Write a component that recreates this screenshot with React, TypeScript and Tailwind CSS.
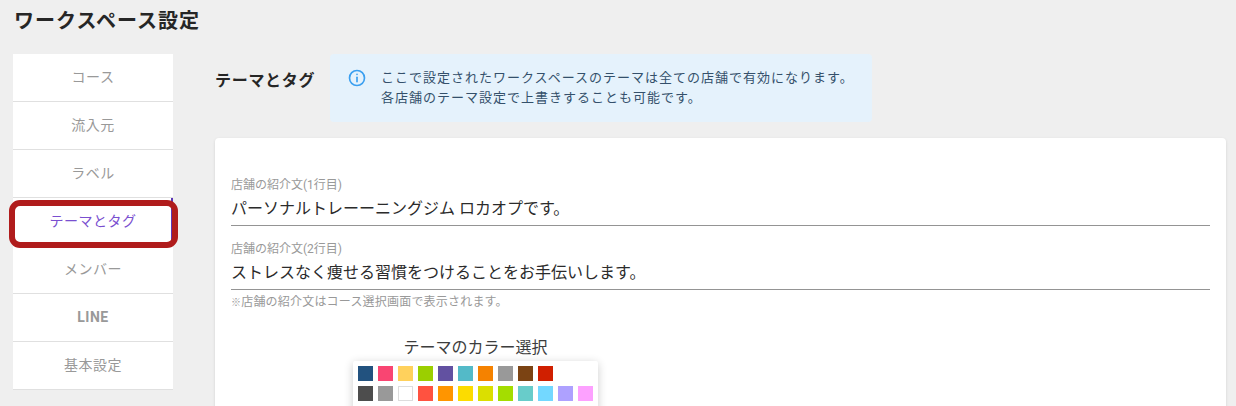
import * as React from "react";

const navItems = ["コース", "流入元", "ラベル", "テーマとタグ", "メンバー", "LINE", "基本設定"];

const colorRows = [
  ["#22527f", "#f94572", "#ffd15c", "#9bcf00", "#6251a1", "#53bac8", "#f58200", "#999999", "#7b4313", "#d01f00"],
  ["#4d4d4d", "#999999", "#ffffff", "#ff5240", "#ff9500", "#fcdc00", "#dbdf00", "#a4dd00", "#68ccca", "#73d8ff", "#aea1ff", "#fda1ff"],
];

function Field({ label, value }: { label: string; value: string }) {
  return (
    <div className="flex flex-col">
      <span className="text-[12px] leading-[16px] text-[#999999]">{label}</span>
      <div className="mt-[4px] h-[29px] border-b border-[#949494] text-[16px] leading-[24px] text-[#2b2b2b]">
        {value}
      </div>
    </div>
  );
}

export default function App() {
  return (
    <div className="h-[406px] w-[1236px] overflow-hidden bg-[#efefef] font-['Roboto','Noto_Sans_CJK_JP',sans-serif]">
      <h1 className="pt-[8px] pl-[14px] text-[20px] leading-[26px] font-bold tracking-[1px] text-[#262626]">
        ワークスペース設定
      </h1>

      <div className="mt-[20px] flex items-start pl-[13px]">
        <nav className="flex w-[160px] flex-col bg-white">
          {navItems.map((item) => {
            const active = item === "テーマとタグ";
            return (
              <div
                className={`relative flex h-[48px] items-center justify-center border-b border-[#e0e0e0] text-[14px] tracking-[0.5px] ${
                  active ? "text-[#7a4fd0]" : "text-[#999999]"
                } ${item === "LINE" ? "font-bold text-[#7a7a7a]" : ""}`}
                key={item}
              >
                {item}
                {active && (
                  <>
                    <span className="absolute top-0 right-0 h-full w-[2px] bg-[#5b37b7]" />
                    <span className="absolute top-[2px] left-[-4px] h-[48px] w-[169px] rounded-[11px] border-[6px] border-[#b01c1c]" />
                  </>
                )}
              </div>
            );
          })}
        </nav>

        <main className="ml-[42px] flex w-[1011px] flex-col">
          <div className="flex h-[68px] items-start">
            <h2 className="mt-[17px] w-[115px] text-[16px] leading-[20px] font-bold tracking-[0.7px] text-[#262626]">
              テーマとタグ
            </h2>
            <div className="flex h-[68px] w-[542px] rounded-[4px] bg-[#e5f2fc] pt-[14px] pl-[18px]">
              <svg
                className="mt-[1px] h-[18px] w-[18px] shrink-0"
                fill="none"
                stroke="#3a9ff0"
                strokeLinecap="round"
                strokeWidth="2.2"
                viewBox="0 0 24 24"
              >
                <circle cx="12" cy="12" r="10" />
                <path d="M12 11v6" />
                <path d="M12 7.2v.1" />
              </svg>
              <p className="ml-[15px] text-[13px] leading-[20px] tracking-[1px] text-[#34506b]">
                ここで設定されたワークスペースのテーマは全ての店舗で有効になります。
                <br />
                各店舗のテーマ設定で上書きすることも可能です。
              </p>
            </div>
          </div>

          <section className="mt-[16px] h-[300px] rounded-[4px] bg-white pt-[39px] pr-[16px] pl-[16px] shadow-[0_1px_3px_rgba(0,0,0,0.12)]">
            <div className="flex flex-col gap-[15px]">
              <Field label="店舗の紹介文(1行目)" value="パーソナルトレーーニングジム ロカオプです。" />
              <Field label="店舗の紹介文(2行目)" value="ストレスなく痩せる習慣をつけることをお手伝いします。" />
            </div>
            <p className="mt-[4px] text-[12px] leading-[16px] tracking-[0.2px] text-[#999999]">
              <span className="text-[10px]">※</span>店舗の紹介文はコース選択画面で表示されます。
            </p>

            <div className="mt-[27px] ml-[122px] w-[245px]">
              <p className="text-center text-[16px] leading-[20px] text-[#3d3d3d]">テーマのカラー選択</p>
              <div className="mt-[3px] flex flex-col gap-[5px] rounded-[2px] bg-white pt-[5px] pl-[5px] shadow-[0_2px_10px_rgba(0,0,0,0.2)]">
                {colorRows.map((row, rowIndex) => (
                  <div className="flex gap-[5px]" key={rowIndex}>
                    {row.map((color, colorIndex) => (
                      <span
                        className={`h-[15px] w-[15px] ${color === "#ffffff" ? "border border-[#dddddd]" : ""}`}
                        key={colorIndex}
                        style={{ backgroundColor: color }}
                      />
                    ))}
                  </div>
                ))}
                <div className="h-[20px]" />
              </div>
            </div>
          </section>
        </main>
      </div>
    </div>
  );
}
